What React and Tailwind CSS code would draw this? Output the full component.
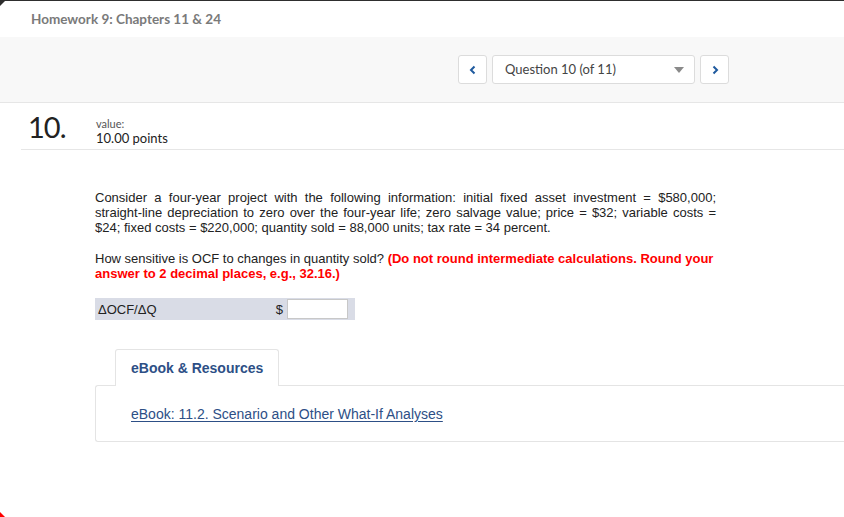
import React from 'react';

function Chevron({ dir = 'left' }) {
  return (
    <svg width="10" height="10" viewBox="0 0 10 10" fill="none">
      {dir === 'left' ? (
        <path d="M6.5 1.5 L3 5 L6.5 8.5" stroke="#1f5a9e" strokeWidth="2" />
      ) : (
        <path d="M3.5 1.5 L7 5 L3.5 8.5" stroke="#1f5a9e" strokeWidth="2" />
      )}
    </svg>
  );
}

export default function App() {
  return (
    <div className="w-[844px] h-[517px] overflow-hidden bg-white border-t border-[#2e2e2e] relative font-['Lato',sans-serif]">
      <div className="absolute left-0 top-0 w-0 h-0 border-t-[5px] border-r-[5px] border-t-[#2e2e2e] border-r-transparent" />
      <div className="absolute left-0 bottom-0 w-0 h-0 border-b-[5px] border-r-[5px] border-b-[#ff0000] border-r-transparent" />

      <div className="h-[36px] pl-[31px] flex items-center text-[13.5px] font-bold text-[#7a7a7a]">
        Homework 9: Chapters 11 &amp; 24
      </div>

      <div className="h-[66px] bg-[#f8f8f8] border-b border-[#e6e6e6] flex items-center pl-[458px] gap-[5px]">
        <button className="w-[29px] h-[29px] bg-white border border-[#dcdcdc] rounded-[3px] flex items-center justify-center">
          <Chevron dir="left" />
        </button>
        <div className="w-[203px] h-[29px] bg-white border border-[#dcdcdc] rounded-[3px] flex items-center justify-between pl-[12px] pr-[10px] text-[13px] text-[#444]">
          <span>Question 10 (of 11)</span>
          <span className="w-0 h-0 border-l-[5px] border-r-[5px] border-t-[6px] border-l-transparent border-r-transparent border-t-[#8a8a8a]" />
        </div>
        <button className="w-[29px] h-[29px] bg-white border border-[#dcdcdc] rounded-[3px] flex items-center justify-center">
          <Chevron dir="right" />
        </button>
      </div>

      <div className="ml-[21px] h-[47px] border-b border-[#e6e6e6] flex items-start pt-[9px]">
        <div className="w-[75px] pl-[7px] text-[29px] leading-[30px] font-normal text-[#222] tracking-[-1px]">10.</div>
        <div className="flex flex-col pt-[6px]">
          <span className="text-[11px] leading-[12px] text-[#555]">value:</span>
          <span className="text-[13px] leading-[16px] text-[#222]">10.00 points</span>
        </div>
      </div>

      <div className="pl-[95px] pr-[128px] pt-[40px] font-['Liberation_Sans',Arial,sans-serif] text-[13px] leading-[15px] text-[#222]">
        <p className="text-justify">
          Consider a four-year project with the following information: initial fixed asset investment = $580,000; straight-line depreciation to zero over the four-year life; zero salvage value; price = $32; variable costs = $24; fixed costs = $220,000; quantity sold = 88,000 units; tax rate = 34 percent.
        </p>
        <p className="mt-[16px]">
          How sensitive is OCF to changes in quantity sold?{' '}
          <span className="font-bold text-[#ff0000]">
            (Do not round intermediate calculations. Round your answer to 2 decimal places, e.g., 32.16.)
          </span>
        </p>
        <div className="mt-[17px] w-[260px] h-[22px] bg-[#d9dce6] flex items-center pl-[3px]">
          <span className="flex-1">ΔOCF/ΔQ</span>
          <span className="mr-[4px]">$</span>
          <div className="w-[61px] h-[20px] bg-white border border-[#c8c8c8] mr-[7px]" />
        </div>
      </div>

      <div className="ml-[95px] mt-[29px] font-['Liberation_Sans',Arial,sans-serif]">
        <div className="ml-[20px] w-[164px] h-[37px] bg-white border border-[#e4e4e4] border-b-0 rounded-t-[3px] flex items-center pl-[15px] text-[14px] font-bold text-[#2d4f86] relative z-10 -mb-px">
          eBook &amp; Resources
        </div>
        <div className="h-[57px] border border-[#e4e4e4] rounded-[3px] border-r-0 rounded-r-none pl-[35px] pt-[16px]">
          <a className="text-[14px] text-[#2d4f86] underline underline-offset-2">
            eBook: 11.2. Scenario and Other What-If Analyses
          </a>
        </div>
      </div>
    </div>
  );
}
